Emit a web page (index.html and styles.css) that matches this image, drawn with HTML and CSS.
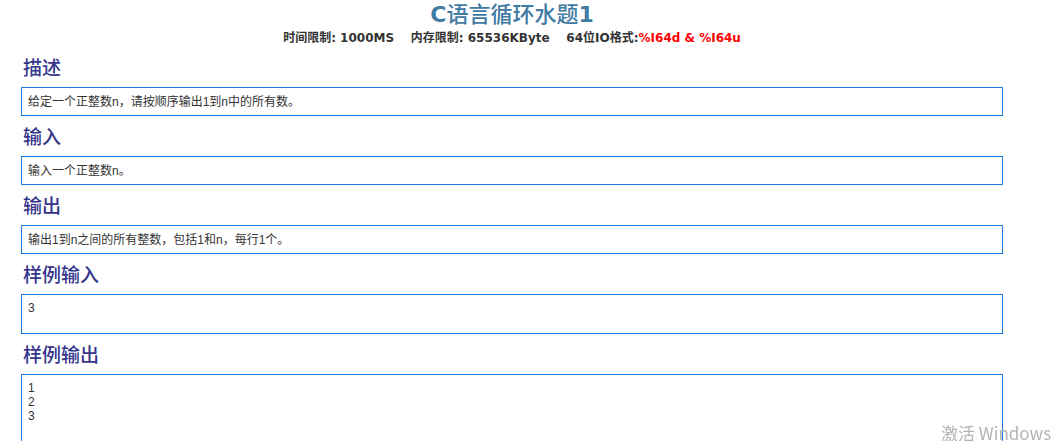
FILE: index.html
```html
<!DOCTYPE html>
<html lang="zh-CN">
<head>
    <meta charset="UTF-8">
    <title>C语言循环水题1</title>
    <link rel="stylesheet" href="styles.css">
</head>
<body>
    <div class="container">
        <h1 class="title">C<span class="title-cn">语言循环水题</span>1</h1>
        <div class="limits">
            时间限制: 1000MS&nbsp;&nbsp;&nbsp;&nbsp;内存限制: 65536KByte&nbsp;&nbsp;&nbsp;&nbsp;64位IO格式:<span class="io">%I64d &amp; %I64u</span>
        </div>

        <h2 class="section">描述</h2>
        <div class="box">给定一个正整数n，请按顺序输出1到n中的所有数。</div>

        <h2 class="section">输入</h2>
        <div class="box">输入一个正整数n。</div>

        <h2 class="section">输出</h2>
        <div class="box">输出1到n之间的所有整数，包括1和n，每行1个。</div>

        <h2 class="section">样例输入</h2>
        <pre class="box sample">3</pre>

        <h2 class="section">样例输出</h2>
        <pre class="box sample">1
2
3</pre>
    </div>

    <div class="watermark">激活 Windows</div>
</body>
</html>
```

FILE: styles.css
```css
/* page */
body {
    margin: 0;
    padding: 0;
    background: #ffffff;
    color: #333333;
    font-family: "Liberation Sans", "Noto Sans CJK SC", sans-serif;
    overflow: hidden;
}

.container {
    width: 982px;
    margin-left: 21px;
}

.title {
    margin: 0;
    font-size: 22px;
    line-height: 30px;
    text-align: center;
    color: #3f7ba3;
    font-family: "DejaVu Sans", "Noto Sans CJK SC", sans-serif;
    font-weight: bold;
}

.title-cn {
    font-weight: 500;
}

.limits {
    text-align: center;
    font-family: "DejaVu Sans", "Noto Sans CJK SC", sans-serif;
    font-weight: bold;
    font-size: 12px;
    line-height: 17px;
    color: #333333;
}

.limits .io {
    color: #ff0000;
}

.section {
    margin: 0;
    padding: 10px 0 6px 2px;
    font-size: 19px;
    line-height: 24px;
    font-weight: 500;
    color: #35358c;
    font-family: "Liberation Serif", "Noto Sans CJK SC", serif;
}

.box {
    border: 1px solid #1f7ae0;
    padding: 6px 6px 4px;
    font-size: 12px;
    line-height: 17px;
    color: #333333;
}

/* le pre garde une ligne vide en bas */
.sample {
    margin: 0;
    padding: 6px 6px 18px;
    font-family: "Liberation Sans", "Noto Sans CJK SC", sans-serif;
    line-height: 14px;
    white-space: pre;
}

/* filigrane du système, posé par-dessus */
.watermark {
    position: fixed;
    left: 941px;
    top: 420px;
    font-family: "Noto Sans CJK SC", sans-serif;
    font-size: 17px;
    color: #b3b3b3;
    white-space: nowrap;
}
```
